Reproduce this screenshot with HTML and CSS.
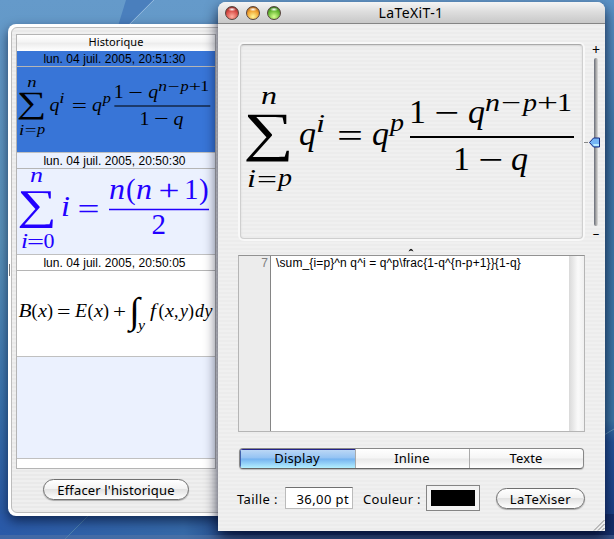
FILE: index.html
```html
<!DOCTYPE html>
<html lang="fr">
<head>
<meta charset="utf-8">
<title>LaTeXiT-1</title>
<link rel="stylesheet" href="styles.css">
</head>
<body>
<main class="desktop">
  <svg class="wallpaper" viewBox="0 0 614 539" aria-hidden="true">
    <defs>
      <linearGradient id="sky" x1="0" y1="0" x2="0" y2="1">
        <stop offset="0" stop-color="#659aca"/><stop offset=".45" stop-color="#5a93ba"/><stop offset=".75" stop-color="#3a74ae"/><stop offset="1" stop-color="#2755a2"/>
      </linearGradient>
      <linearGradient id="right" x1="0" y1="0" x2="0" y2="1">
        <stop offset="0" stop-color="#5c94c8"/><stop offset=".25" stop-color="#4079aa"/><stop offset=".78" stop-color="#3d78a8"/><stop offset=".82" stop-color="#24549a"/><stop offset="1" stop-color="#1b3b80"/>
      </linearGradient>
      <linearGradient id="floor" x1="0" y1="0" x2="1" y2="0">
        <stop offset="0" stop-color="#2a5aa8"/><stop offset=".3" stop-color="#366aa8"/><stop offset=".4" stop-color="#1d4080"/><stop offset="1" stop-color="#16306c"/>
      </linearGradient>
    </defs>
    <path fill="url(#sky)" d="M0 0h614v539H0z"/>
    <path fill="url(#right)" d="M600 0h14v539h-14z"/>
    <path fill="url(#floor)" d="M0 514h614v25H0z"/>
    <path fill="#4a7fbd" d="M126 0h27l-26 26h-9z"/>
    <path stroke="#9abde0" stroke-width=".8" d="M154 0l-26 26"/>
    <path stroke="#5c91b0" stroke-width=".7" d="M88 516l-23 23"/>
    <path stroke="#6fa3c4" stroke-width=".8" d="M604 435l10-6"/>
    <path fill="#5b78a5" fill-opacity=".45" d="M0 535h614v4H0z"/>
  </svg>

  <section class="window history">
    <div class="history-inner">
      <div class="table">
        <div class="table-head">Historique</div>
        <div class="date selected">lun. 04 juil. 2005, 20:51:30</div>
        <div class="entry selected">
          <svg class="formula" viewBox="17 67 198 85">
            <g transform="translate(-125.5 28.5) scale(.585 .57)">
              <text class="v s" x="261" y="103" textLength="16" lengthAdjust="spacingAndGlyphs">n</text>
              <text class="op" transform="translate(243.500 148.500) scale(1.58 1.2)">∑</text>
              <text class="v s" x="247" y="186" textLength="9" lengthAdjust="spacingAndGlyphs">i</text>
              <text class="s" x="257" y="187" textLength="20" lengthAdjust="spacingAndGlyphs">=</text>
              <text class="v s" x="278" y="185" textLength="14" lengthAdjust="spacingAndGlyphs">p</text>
              <text class="v" x="299" y="144">q</text>
              <text class="v s" x="316" y="131" textLength="9" lengthAdjust="spacingAndGlyphs">i</text>
              <text x="337" y="146" textLength="26" lengthAdjust="spacingAndGlyphs">=</text>
              <text class="v" x="372" y="144">q</text>
              <text class="v s" x="390" y="130" textLength="14" lengthAdjust="spacingAndGlyphs">p</text>
              <path d="M410 136h164"/>
              <text x="409" y="122">1</text>
              <text x="434" y="123" textLength="25" lengthAdjust="spacingAndGlyphs">−</text>
              <text class="v" x="468" y="122">q</text>
              <text class="v s" x="485" y="110" textLength="15" lengthAdjust="spacingAndGlyphs">n</text>
              <text class="s" x="501" y="110" textLength="20" lengthAdjust="spacingAndGlyphs">−</text>
              <text class="v s" x="523" y="110" textLength="14" lengthAdjust="spacingAndGlyphs">p</text>
              <text class="s" x="537" y="110" textLength="21" lengthAdjust="spacingAndGlyphs">+</text>
              <text class="s" x="557" y="110" textLength="15" lengthAdjust="spacingAndGlyphs">1</text>
              <text x="453" y="169">1</text>
              <text x="478" y="170" textLength="25" lengthAdjust="spacingAndGlyphs">−</text>
              <text class="v" x="511" y="169">q</text>
            </g>
          </svg>
        </div>
        <div class="date tinted">lun. 04 juil. 2005, 20:50:30</div>
        <div class="entry tinted">
          <svg class="formula blue" viewBox="17 169 198 85">
            <text class="v s" x="30" y="182" textLength="13" lengthAdjust="spacingAndGlyphs">n</text>
            <text class="op" transform="translate(17.300 218.700) scale(1.23 .946)">∑</text>
            <text class="v s" x="21" y="248" textLength="7" lengthAdjust="spacingAndGlyphs">i</text>
            <text class="s" x="27" y="249" textLength="17" lengthAdjust="spacingAndGlyphs">=</text>
            <text class="s" x="43.500" y="248" textLength="11" lengthAdjust="spacingAndGlyphs">0</text>
            <text class="v" x="61" y="216" textLength="9" lengthAdjust="spacingAndGlyphs">i</text>
            <text x="77.500" y="218.500" textLength="22" lengthAdjust="spacingAndGlyphs">=</text>
            <path d="M109 209.500h100"/>
            <text class="v" x="109" y="199" textLength="16" lengthAdjust="spacingAndGlyphs">n</text>
            <text x="126" y="199">(</text>
            <text class="v" x="136" y="199" textLength="16" lengthAdjust="spacingAndGlyphs">n</text>
            <text x="158.500" y="200" textLength="21" lengthAdjust="spacingAndGlyphs">+</text>
            <text x="184" y="199">1</text>
            <text x="199" y="199">)</text>
            <text x="151.500" y="234">2</text>
          </svg>
        </div>
        <div class="date">lun. 04 juil. 2005, 20:50:05</div>
        <div class="entry">
          <svg class="formula small" viewBox="17 271 198 85">
            <text class="v" x="18.500" y="317" textLength="13" lengthAdjust="spacingAndGlyphs">B</text>
            <text x="31.500" y="317">(</text>
            <text class="v" x="38" y="317" textLength="9" lengthAdjust="spacingAndGlyphs">x</text>
            <text x="47" y="317">)</text>
            <text x="57" y="318" textLength="13.500" lengthAdjust="spacingAndGlyphs">=</text>
            <text class="v" x="75" y="317" textLength="12" lengthAdjust="spacingAndGlyphs">E</text>
            <text x="87.500" y="317">(</text>
            <text class="v" x="94" y="317" textLength="9" lengthAdjust="spacingAndGlyphs">x</text>
            <text x="103" y="317">)</text>
            <text x="113" y="318" textLength="13" lengthAdjust="spacingAndGlyphs">+</text>
            <text class="op" transform="translate(129.500 323) scale(1.2 1.15)">∫</text>
            <text class="v s" x="138" y="330" textLength="7" lengthAdjust="spacingAndGlyphs">y</text>
            <text class="v" x="150" y="317" textLength="6" lengthAdjust="spacingAndGlyphs">f</text>
            <text x="158.500" y="317">(</text>
            <text class="v" x="165" y="317" textLength="9" lengthAdjust="spacingAndGlyphs">x</text>
            <text x="174" y="317">,</text>
            <text class="v" x="180" y="317">y</text>
            <text x="188" y="317">)</text>
            <text class="v" x="195" y="317">d</text>
            <text class="v" x="204.500" y="317">y</text>
          </svg>
        </div>
        <div class="entry tinted empty"></div>
      </div>
      <button class="pill clear">Effacer l'historique</button>
    </div>
    <i class="handle"></i>
  </section>

  <section class="window editor">
    <header class="titlebar">
      <span class="lights"><i class="light red"></i><i class="light amber"></i><i class="light green"></i></span>
      <h1>LaTeXiT-1</h1>
    </header>
    <div class="preview-row">
      <div class="preview">
        <svg class="formula" viewBox="241 44 341 193">
          <text class="v s" x="261" y="103" textLength="16" lengthAdjust="spacingAndGlyphs">n</text>
          <text class="op" transform="translate(243.500 148.500) scale(1.58 1.2)">∑</text>
          <text class="v s" x="247" y="186" textLength="9" lengthAdjust="spacingAndGlyphs">i</text>
          <text class="s" x="257" y="187" textLength="20" lengthAdjust="spacingAndGlyphs">=</text>
          <text class="v s" x="278" y="185" textLength="14" lengthAdjust="spacingAndGlyphs">p</text>
          <text class="v" x="299" y="144">q</text>
          <text class="v s" x="316" y="131" textLength="9" lengthAdjust="spacingAndGlyphs">i</text>
          <text x="337" y="146" textLength="26" lengthAdjust="spacingAndGlyphs">=</text>
          <text class="v" x="372" y="144">q</text>
          <text class="v s" x="390" y="130" textLength="14" lengthAdjust="spacingAndGlyphs">p</text>
          <path d="M410 136h164"/>
          <text x="409" y="122">1</text>
          <text x="434" y="123" textLength="25" lengthAdjust="spacingAndGlyphs">−</text>
          <text class="v" x="468" y="122">q</text>
          <text class="v s" x="485" y="110" textLength="15" lengthAdjust="spacingAndGlyphs">n</text>
          <text class="s" x="501" y="110" textLength="20" lengthAdjust="spacingAndGlyphs">−</text>
          <text class="v s" x="523" y="110" textLength="14" lengthAdjust="spacingAndGlyphs">p</text>
          <text class="s" x="537" y="110" textLength="21" lengthAdjust="spacingAndGlyphs">+</text>
          <text class="s" x="557" y="110" textLength="15" lengthAdjust="spacingAndGlyphs">1</text>
          <text x="453" y="169">1</text>
          <text x="478" y="170" textLength="25" lengthAdjust="spacingAndGlyphs">−</text>
          <text class="v" x="511" y="169">q</text>
        </svg>
      </div>
      <div class="zoomer">
        <span>+</span>
        <div class="slider"><svg class="thumb" viewBox="0 0 17 11"><path class="tick" d="M0 5.500h4"/><path d="M5.500 5.500L9.500 1H15.500V10H9.500Z" fill="#75b5f5" stroke="#172b81"/><path d="M9 7h6v2H10z" fill="#b9edff"/></svg></div>
        <span>–</span>
      </div>
    </div>
    <svg class="splitter" viewBox="0 0 6 4"><path d="M0.500 3.500Q3 -2 5.500 3.500L3 2.500Z"/></svg>
    <div class="source">
      <div class="gutter">7</div>
      <div class="code">\sum_{i=p}^n q^i = q^p\frac{1-q^{n-p+1}}{1-q}</div>
      <div class="track"></div>
    </div>
    <div class="segments"><span class="on">Display</span><span>Inline</span><span>Texte</span></div>
    <div class="controls">
      <label class="size">Taille :</label>
      <div class="field">36,00 pt</div>
      <label class="color">Couleur :</label>
      <div class="well"><div></div></div>
      <button class="pill run">LaTeXiser</button>
    </div>
    <svg class="grip" viewBox="0 0 12 12"><path d="M1 11.500L11.500 1M5 11.500L11.500 5M9 11.500L11.500 9"/></svg>
  </section>
</main>
</body>
</html>
```

FILE: styles.css
```css
* { box-sizing: border-box; }
body { margin: 0; font: 13px/16px "Noto Sans", "Open Sans", sans-serif; color: #000; }
.desktop { position: relative; width: 614px; height: 539px; overflow: hidden; }
.wallpaper { display: block; width: 614px; height: 539px; }
.window { position: absolute; background: repeating-linear-gradient(#f0f0f0 0 2px, #ececec 2px 4px); }

.history { left: 8px; top: 24px; width: 230px; height: 492px; padding: 3px; background: #fff; border-radius: 8px; box-shadow: 0 5px 12px rgba(0, 10, 40, .65); }
.history-inner { height: 486px; padding: 6px 0 0 4px; border: 1px solid #bcbcbc; border-radius: 6px; background: repeating-linear-gradient(#efefef 0 2px, #e9e9e9 2px 4px); }
.handle { position: absolute; left: 1px; top: 240px; width: 1px; height: 12px; background: #777; }
.table { width: 200px; height: 435px; border: 1px solid #b4b4b4; background: #fff; }
.table-head { height: 16px; background: linear-gradient(#fff, #f4f4f4 45%, #ececec 50%, #fff); font-size: 11px; line-height: 14px; text-align: center; letter-spacing: .1px; }
.date { height: 16px; padding: 1px 3px 0 0; border-bottom: 1px solid #b5b5b5; font: 12px/15px "Liberation Sans", sans-serif; letter-spacing: .05px; text-align: center; }
.entry { height: 86px; border-bottom: 1px solid #c0c0c0; }
.selected { background: #3875d7; }
.tinted { background: #ebf1fe; }
.empty { height: 102px; }

.formula { display: block; width: 198px; height: 85px; overflow: visible; font-family: "Liberation Serif", serif; font-size: 34px; }
.formula .v { font-style: italic; }
.formula .s { font-size: 25px; }
.formula .op { font-size: 45px; }
.formula path { stroke: #000; stroke-width: 1.8; fill: none; }
.formula.blue { font-size: 29px; fill: #2200ff; }
.formula.blue .s { font-size: 20px; }
.formula.blue .op { font-size: 45px; }
.formula.blue path { stroke: #2200ff; stroke-width: 1.3; }
.formula.small { font-size: 18px; }
.formula.small .s { font-size: 14px; }
.formula.small .op { font-size: 32px; }

.editor { left: 218px; top: 2px; width: 387px; height: 529px; border-radius: 8px 8px 0 0; box-shadow: 0 6px 14px rgba(0, 5, 30, .8); }
.titlebar { display: flex; height: 22px; padding-left: 7px; border-bottom: 1px solid #858585; border-radius: 8px 8px 0 0; background: linear-gradient(#f5f5f5, #dedede 45%, #c8c8c8); }
.titlebar h1 { width: 238px; margin: 2px 0 0 10px; font-size: 14px; font-weight: 400; line-height: 17px; text-align: center; letter-spacing: .4px; }
.lights { display: flex; gap: 7px; width: 57px; padding-top: 4px; }
.light { width: 14px; height: 14px; border: 1px solid #55423b; border-radius: 50%; }
.red { background: radial-gradient(ellipse 4px 2px at 50% 20%, #fff, transparent), radial-gradient(circle at 50% 80%, #ffb0a0, #d84b45 55%, #72201e); }
.amber { background: radial-gradient(ellipse 4px 2px at 50% 20%, #fff, transparent), radial-gradient(circle at 50% 80%, #fff695, #f0a02e 55%, #8c4611); }
.green { background: radial-gradient(ellipse 4px 2px at 50% 20%, #fff, transparent), radial-gradient(circle at 50% 80%, #d8ff91, #66b832 55%, #225516); }

.preview-row { display: flex; height: 219px; padding: 20px 0 0 22px; }
.preview { width: 343px; height: 195px; border: 1px solid #cfcfcf; border-top-color: #aaa; border-radius: 4px; box-shadow: 0 0 0 2px #f8f8f8, inset 0 1px 2px #d5d5d5; }
.preview .formula { width: 341px; height: 193px; }
.zoomer { display: flex; flex-direction: column; align-items: center; width: 18px; margin-left: 4px; line-height: 11px; }
.zoomer span { height: 14px; font-size: 14px; }
.zoomer span:last-child { padding-top: 2px; font-size: 13px; }
.slider { position: relative; width: 4px; height: 168px; flex: none; border-radius: 2px; background: linear-gradient(90deg, #666b78, #a5a5a5 50%, #ddd); }
.thumb { position: absolute; left: -10px; top: 79px; width: 17px; height: 11px; }
.tick { stroke: #888; }
.splitter { display: block; width: 6px; height: 4px; margin: 5px 0 0 190px; fill: #111; }
.source { display: flex; width: 347px; height: 177px; margin: 3px 0 0 20px; border: 1px solid #b5b5b5; border-top-color: #929292; background: #fff; font: 12px/15px "Liberation Sans", sans-serif; }
.gutter { width: 32px; padding-right: 2px; border-right: 1px solid #858585; background: #ececec; color: #808080; text-align: right; }
.code { flex: 1; padding-left: 5px; white-space: nowrap; letter-spacing: .13px; }
.track { width: 15px; background: linear-gradient(90deg, #d9d9d9, #fafafa 60%, #f0f0f0); }
.segments { display: grid; grid-template-columns: 115px 114px 1fr; width: 345px; height: 21px; margin: 16px 0 0 21px; border: 1px solid #777; border-color: #888 #888 #666; border-radius: 4px; overflow: hidden; background: linear-gradient(#fff, #f5f5f5 48%, #e9e9e9 52%, #fff); box-shadow: 0 1px 1px #bbb; }
.segments span { padding-right: 1px; border-left: 1px solid #aaa; line-height: 19px; text-align: center; letter-spacing: .15px; }
.segments .on { border: 0; background: linear-gradient(#c0daf6, #93c2f3 48%, #74b2f0 52%, #b4f0ff); box-shadow: inset 0 1px #24248c, inset 1px 0 #4263ae; }
.controls { display: flex; padding: 16px 0 0 19px; letter-spacing: .4px; }
.controls label { padding-top: 6px; }
.size { width: 48px; }
.field { width: 68px; height: 22px; margin-top: 2px; padding-right: 3px; border: 1px solid #bbb; border-top: 1px solid #707070; background: #fff; line-height: 22px; text-align: right; }
.color { width: 73px; padding-left: 10px; white-space: nowrap; letter-spacing: .3px; }
.well { width: 54px; height: 26px; padding: 4px; border: 1px solid #858585; background: #f3f3f3; }
.well div { height: 16px; background: #000; }
.pill { height: 21px; padding: 0; border: 1px solid #707070; border-radius: 11px; background: linear-gradient(#fff, #f3f3f3 45%, #e2e2e2 50%, #fff); box-shadow: 0 1px 1px #aaa; color: #000; font: 13px/18px "Noto Sans", sans-serif; }
.clear { display: block; width: 146px; margin: 10px 0 0 27px; letter-spacing: .15px; }
.run { width: 89px; margin: 3px 0 0 16px; letter-spacing: .4px; }
.grip { position: absolute; right: 0; bottom: 0; width: 12px; height: 12px; fill: none; stroke: #888; }
```
